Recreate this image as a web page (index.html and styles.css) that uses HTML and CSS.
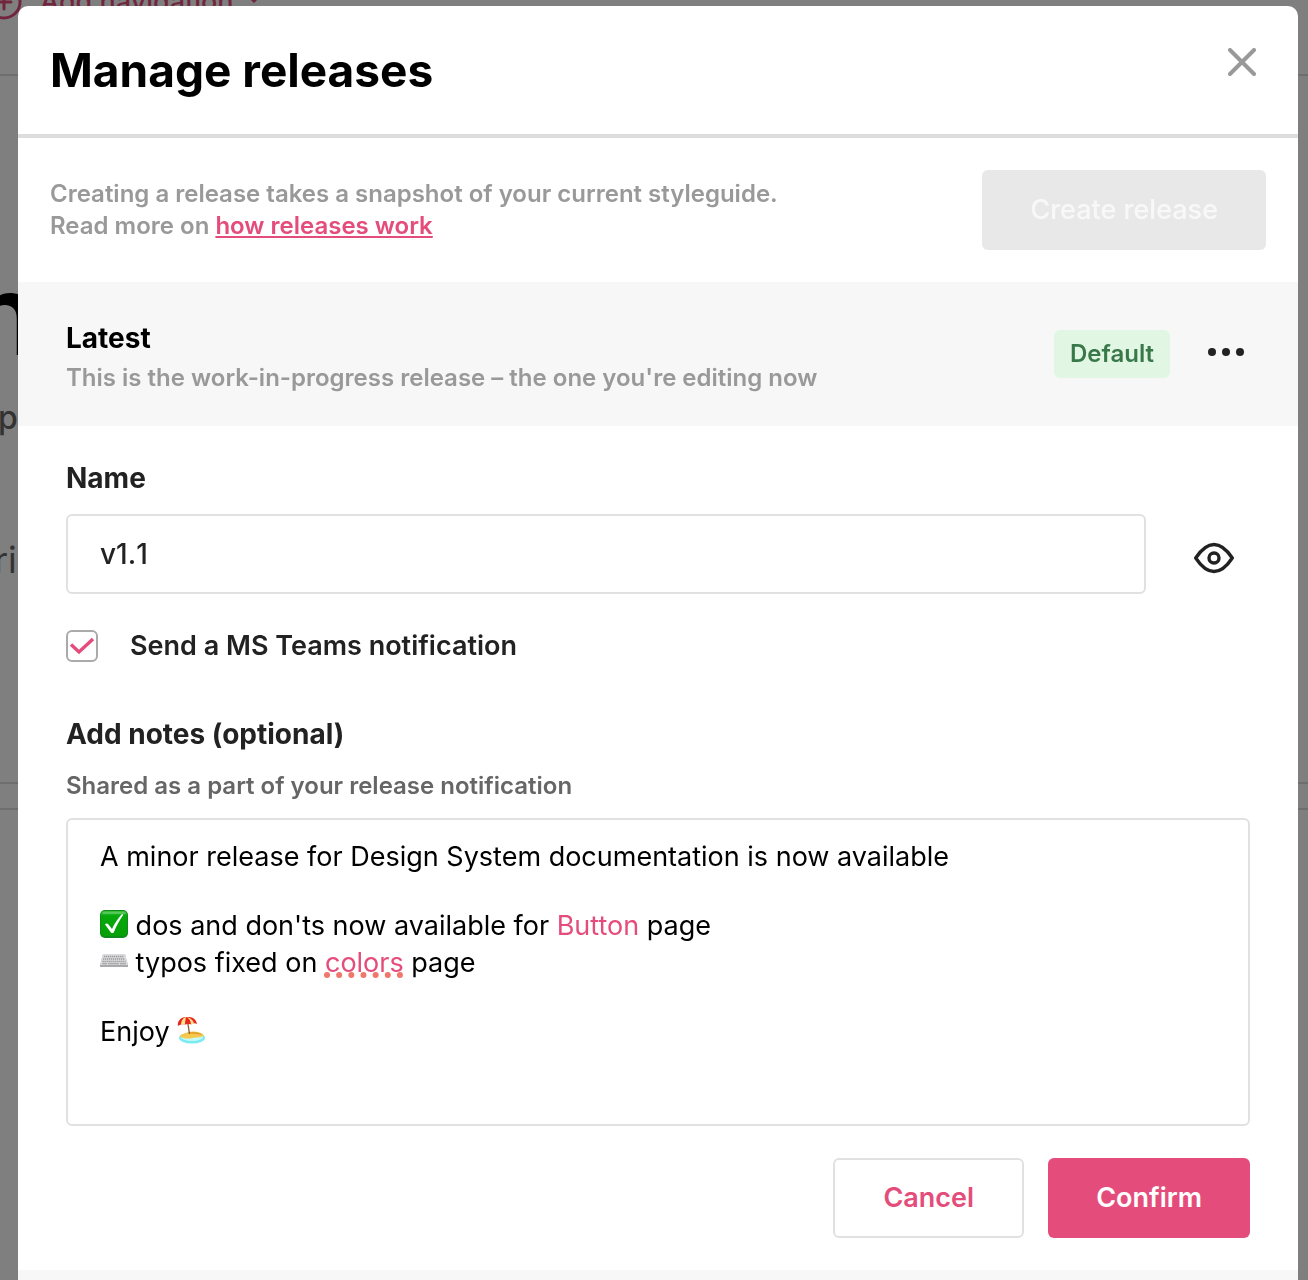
FILE: index.html
```html
<!DOCTYPE html>
<html lang="en">
<head>
    <meta charset="UTF-8">
    <meta name="viewport" content="width=device-width, initial-scale=1.0">
    <title>Manage releases</title>
    <link rel="stylesheet" href="styles.css">
</head>
<body>

<!-- Styleguide page behind the modal -->
<div class="page" aria-hidden="true">
    <div class="topbar">
        <svg class="plus" viewBox="0 0 36 36" fill="none" stroke="currentColor" stroke-width="3" stroke-linecap="round">
            <circle cx="18" cy="18" r="16"/>
            <path d="M18 11v14M11 18h14"/>
        </svg>
        <span>Add navigation</span>
        <svg class="chevron" viewBox="0 0 12 12" fill="none" stroke="currentColor" stroke-width="3" stroke-linecap="round">
            <path d="M1 2l5 5 5-5"/>
        </svg>
    </div>
    <div class="hero">
        <h2>n</h2>
        <p class="lead">p</p>
        <p class="text">ri</p>
    </div>
    <div class="divider"></div>
</div>

<!-- The Modal -->
<div class="overlay">
    <div class="modal" role="dialog" aria-labelledby="modalTitle">
        <div class="modal-header">
            <h1 id="modalTitle">Manage releases</h1>
            <button type="button" class="icon-button close" aria-label="Close">
                <svg width="28" height="28" viewBox="0 0 28 28" fill="none" stroke="currentColor" stroke-width="4" stroke-linecap="round">
                    <path d="M2 2l24 24M26 2L2 26"/>
                </svg>
            </button>
        </div>

        <div class="intro">
            <p>Creating a release takes a snapshot of your current styleguide.<br>Read more on <a href="#">how releases work</a></p>
            <button type="button" class="btn btn-disabled" disabled>Create release</button>
        </div>

        <div class="release">
            <div class="release-info">
                <h2>Latest</h2>
                <p>This is the work-in-progress release – the one you're editing now</p>
            </div>
            <span class="badge">Default</span>
            <button type="button" class="icon-button more" aria-label="More options">
                <svg width="48" height="48" viewBox="0 0 48 48" fill="currentColor">
                    <circle cx="10" cy="22" r="4"/>
                    <circle cx="24" cy="22" r="4"/>
                    <circle cx="38" cy="22" r="4"/>
                </svg>
            </button>
        </div>

        <form class="release-form">
            <label class="label" for="releaseName">Name</label>
            <div class="name-row">
                <input type="text" id="releaseName" value="v1.1">
                <button type="button" class="icon-button eye" aria-label="Preview">
                    <svg width="40" height="40" viewBox="0 0 40 40" fill="none" stroke="currentColor" stroke-width="3.400" stroke-linejoin="round">
                        <path d="M1.700 20C7 12 12.500 6.500 20 6.500S33 12 38.300 20C33 28 27.500 33.500 20 33.500S7 28 1.700 20z"/>
                        <circle cx="20" cy="20" r="5"/>
                    </svg>
                </button>
            </div>

            <div class="check-row">
                <input type="checkbox" id="notify" checked>
                <svg class="tick" viewBox="0 0 32 32" fill="none" stroke="currentColor" stroke-width="3.400">
                    <path d="M5 14.500l8 7.500L27 9"/>
                </svg>
                <label for="notify">Send a MS Teams notification</label>
            </div>

            <h3 class="label" id="notesLabel">Add notes (optional)</h3>
            <p class="hint" id="notesHint">Shared as a part of your release notification</p>
            <div class="editor" contenteditable="true" spellcheck="false" role="textbox" aria-multiline="true" aria-labelledby="notesLabel" aria-describedby="notesHint">
                <p>A minor release for Design System documentation is now available</p>
                <p><svg class="emoji" viewBox="0 0 28 28" role="img" aria-label="Check mark">
                    <defs>
                        <linearGradient id="green" x1="0" y1="0" x2="0" y2="1">
                            <stop offset="0" stop-color="#3fc13f"/>
                            <stop offset="0.200" stop-color="#06a80c"/>
                            <stop offset="1" stop-color="#05a005"/>
                        </linearGradient>
                    </defs>
                    <rect width="28" height="28" rx="5" fill="#118a1c"/>
                    <rect x="1" y="1" width="26" height="25" rx="4" fill="url(#green)"/>
                    <path d="M3 3h22" stroke="#7fd982" stroke-width="1" stroke-linecap="round"/>
                    <path d="M5 14.500c1-1.500 2.500-1.500 3.500 0l3.500 4.500C14.500 13.500 17.500 9 21.500 4.500c1-.5 2-.3 1.500.7C19.500 10 16 16.500 14 22c-.5 1.300-2.500 1.500-3.300.2z" fill="#fff"/>
                </svg> dos and don'ts now available for <a href="#">Button</a> page<br><svg class="emoji" viewBox="0 0 28 28" role="img" aria-label="Keyboard">
                    <path d="M3 7h22l3 11v2H0v-2z" fill="#a9a9ab"/>
                    <path d="M3 7h22l3 11H0z" fill="#dcdcde"/>
                    <path d="M4 9.500h20M3 12h22M2.500 14.500h23" stroke="#98989b" stroke-width="1.500" stroke-dasharray="1.300 .7"/>
                    <path d="M2 16.800h5M8 16.800h11M20 16.800h6" stroke="#98989b" stroke-width="1"/>
                </svg> typos fixed on <a href="#" class="misspelled">colors</a> page</p>
                <p>Enjoy <svg class="emoji" viewBox="0 0 28 28" role="img" aria-label="Beach umbrella">
                    <ellipse cx="15" cy="22" rx="13" ry="5.500" fill="#7de9f2"/>
                    <ellipse cx="15" cy="21" rx="11" ry="4" fill="#c4fbf8"/>
                    <path d="M3 20c1-2 4-2.500 7-3.500 6-2 14-.5 17 3-3 2.500-7 1.500-11 2.500S5 23 3 20z" fill="#f5c84e"/>
                    <path d="M10 17c6-2 13-.5 16 2-5-1-10-.8-16-2z" fill="#e2a22f"/>
                    <path d="M10.500 5l2 13" stroke="#8c5a35" stroke-width="1.300"/>
                    <path d="M1 10C0 5 4 1 9 1c5-.5 10 1 11 7-2-1-4-1-6 .5-2-.8-4-.3-6 0-2.500-.6-5 0-7 1.500z" fill="#e8281e"/>
                    <path d="M4 8.500C4 5 6 2 9 1c-.5 3-1 5-1 7.500-1.500-.5-3-.3-4 0zM9 1c3 1 5 4 5 7.500l3-1C16 4 13 1.500 9 1z" fill="#ffe58f"/>
                </svg></p>
            </div>

            <div class="actions">
                <button type="button" class="btn btn-outline">Cancel</button>
                <button type="submit" class="btn btn-primary">Confirm</button>
            </div>
        </form>

        <div class="release"></div>
    </div>
</div>

</body>
</html>
```
FILE: styles.css
```css
* {
    box-sizing: border-box;
}
body {
    margin: 0;
    overflow: hidden;
    background-color: #fff;
    color: #222;
    font-family: Inter, "Liberation Sans", sans-serif;
    font-size: 28px;
    line-height: 40px;
}
h1, h2, h3, p {
    margin: 0;
}
button, input {
    font: inherit;
}

/* Page behind the modal, scrolled a little */
.page {
    margin: -40px 0 0 -14px;
}
.topbar {
    display: flex;
    align-items: center;
    gap: 18px;
    height: 116px;
    padding-bottom: 30px;
    border-bottom: 2px solid #ddd;
    color: #e44d7b;
    font-size: 27px;
    font-weight: 500;
}
.plus {
    width: 36px;
    height: 36px;
}
.chevron {
    width: 12px;
    height: 12px;
    margin: 0 0 4px -4px;
}
.hero {
    height: 708px;
    padding-top: 174px;
    border-bottom: 2px solid #ddd;
    color: #666;
}
.hero h2 {
    margin-left: -16px;
    color: #000;
    font-size: 112px;
    font-weight: 600;
    line-height: 128px;
}
.lead {
    margin: 20px 0 0 12px;
    font-size: 32px;
    font-weight: 500;
}
.text {
    margin: 102px 0 0 8px;
    font-size: 36px;
}
.divider {
    height: 26px;
    border-bottom: 2px solid #ddd;
}

/* Styles for the modal */
.overlay {
    position: fixed;
    z-index: 1;
    inset: 0;
    overflow: hidden;
    padding: 6px 10px 0 18px;
    background-color: rgba(0, 0, 0, 0.5);
}
.modal {
    overflow: hidden;
    border-radius: 10px;
    background-color: #fff;
}
.modal-header {
    display: flex;
    justify-content: space-between;
    align-items: flex-start;
    padding: 32px;
    border-bottom: 4px solid #ddd;
}
.modal-header h1 {
    color: #000;
    font-size: 46px;
    font-weight: 700;
    line-height: 64px;
}
.icon-button {
    display: flex;
    justify-content: center;
    align-items: center;
    flex-shrink: 0;
    width: 48px;
    height: 48px;
    padding: 0;
    border: none;
    background: none;
    color: #222;
    cursor: pointer;
}
.icon-button.close {
    color: #999;
}

.intro {
    display: flex;
    justify-content: space-between;
    align-items: center;
    padding: 32px;
    color: #999;
    font-size: 24px;
    font-weight: 600;
    line-height: 32px;
}
a {
    color: #e44d7b;
}

/* Buttons */
.btn {
    height: 80px;
    padding: 0 48px;
    border: none;
    border-radius: 6px;
    font-size: 27px;
    font-weight: 600;
    cursor: pointer;
}
.btn-disabled {
    background-color: #e8e8e8;
    color: #f8f8f8;
    font-weight: 500;
    cursor: default;
}
.btn-outline {
    border: 2px solid #e1e1e1;
    background-color: #fff;
    color: #e44d7b;
}
.btn-primary {
    background-color: #e44d7b;
    color: #fff;
}

/* Release row */
.release {
    display: flex;
    align-items: center;
    min-height: 144px;
    padding: 32px 48px;
    background-color: #f7f7f7;
}
.release-info {
    flex: 1;
}
.release-info h2 {
    color: #000;
    font-size: 28px;
    font-weight: 700;
    line-height: 48px;
}
.release-info p {
    color: #999;
    font-size: 24px;
    font-weight: 600;
    line-height: 32px;
}
.badge {
    margin-right: 32px;
    padding: 0 16px;
    border-radius: 6px;
    background-color: #e1f7e3;
    color: #3a784a;
    font-size: 24px;
    font-weight: 600;
    line-height: 48px;
}

/* Release form */
.release-form {
    padding: 32px 48px;
}
.label {
    display: block;
    font-size: 28px;
    font-weight: 700;
}
.name-row {
    display: flex;
    align-items: flex-end;
    gap: 32px;
    margin-top: 16px;
}
.name-row input {
    flex: 1;
    height: 80px;
    padding: 0 32px;
    border: 2px solid #e1e1e1;
    border-radius: 6px;
    color: #222;
    font-weight: 500;
    font-kerning: none;
}
.icon-button.eye {
    width: 72px;
    height: 72px;
}
.check-row {
    position: relative;
    display: flex;
    align-items: center;
    gap: 32px;
    margin: 32px 0 48px;
    font-size: 27px;
    font-weight: 600;
}
.check-row input {
    appearance: none;
    width: 32px;
    height: 32px;
    margin: 0;
    border: 2px solid #aaa;
    border-radius: 6px;
}
.tick {
    position: absolute;
    left: 0;
    width: 32px;
    height: 32px;
    color: #e44d7b;
    pointer-events: none;
}
.check-row input:not(:checked) + .tick {
    display: none;
}
.hint {
    margin: 16px 0;
    color: #666;
    font-size: 24px;
    font-weight: 600;
    line-height: 32px;
}
.editor {
    min-height: 308px;
    padding: 18px 32px;
    border: 2px solid #e1e1e1;
    border-radius: 6px;
    color: #000;
    font-size: 27px;
    line-height: 37px;
}
.editor p + p {
    margin-top: 32px;
}
.editor a {
    text-decoration: none;
}
.editor .misspelled {
    text-decoration: underline dotted #f0776c 6px;
    text-decoration-skip-ink: none;
    text-underline-offset: 0px;
}
.emoji {
    width: 28px;
    height: 28px;
    vertical-align: -3px;
}
.actions {
    display: flex;
    justify-content: flex-end;
    gap: 24px;
    margin-top: 32px;
}
```
